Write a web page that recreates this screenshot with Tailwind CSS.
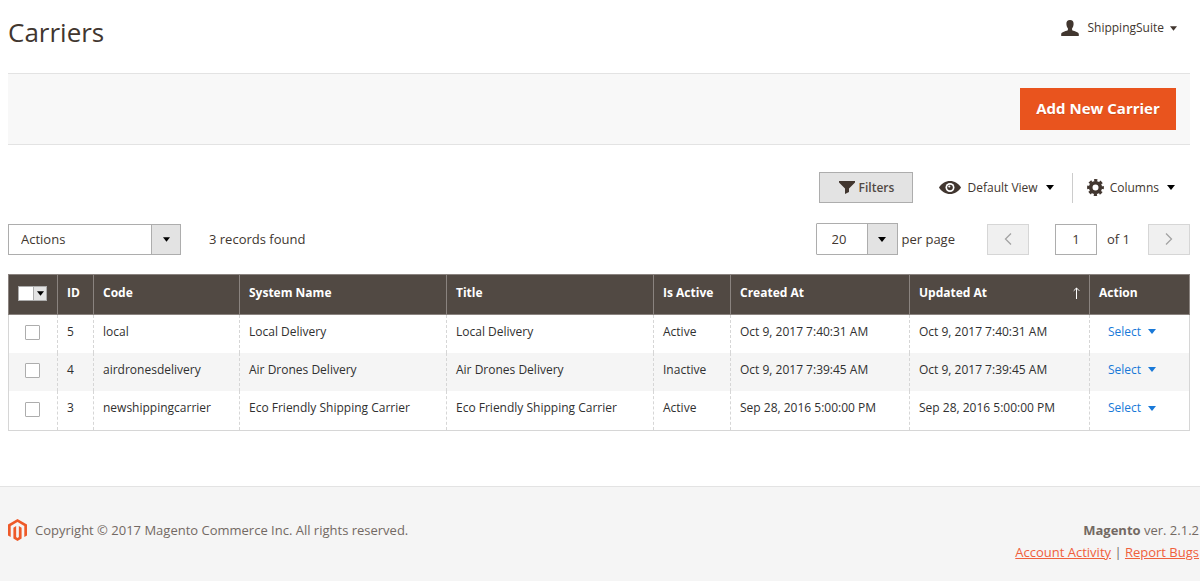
<!DOCTYPE html>
<html lang="en">
<head>
  <meta charset="UTF-8" />
  <meta name="viewport" content="width=device-width, initial-scale=1.0"/>
  <title>Carriers</title>
  <script src="https://cdn.jsdelivr.net/npm/@tailwindcss/browser@4"></script>
</head>
<body class="bg-white text-[#41362f] font-['Open_Sans','Noto_Sans',sans-serif] text-sm">

  <!-- shared icons -->
  <svg class="hidden">
    <symbol id="caret" viewBox="0 0 8 5"><path d="M0 0h8L4 5z" fill="currentColor"/></symbol>
  </svg>

  <div class="pl-2 pr-[10px]">
    <header class="flex items-start justify-between h-[73px] pt-3 pr-[13px]">
      <h1 class="text-[26px] leading-10">Carriers</h1>
      <button class="flex items-center h-8 text-xs">
        <svg class="w-[18px] h-4 mr-2" viewBox="0 0 18 16" fill="#41362f"><path d="M9 0C6.500 0 5.300 1.600 5.400 4c.1 2 .6 3.300 1.500 4.200v1.900C6.300 11.200.600 11.600.200 14v2h17.600v-2c-.4-2.400-6.100-2.800-6.700-3.900V8.200c.9-.9 1.400-2.200 1.500-4.200C12.700 1.600 11.500 0 9 0z"/></svg>
        ShippingSuite
        <svg class="w-[7px] h-[5px] ml-[6px]"><use href="#caret"/></svg>
      </button>
    </header>

    <div class="flex justify-end bg-[#f8f8f8] border-y border-[#e3e3e3] py-[14px] pr-[14px]">
      <button class="h-[42px] w-[156px] bg-[#e9541e] text-white font-bold text-[15px] text-shadow-2xs">Add New Carrier</button>
    </div>

    <!-- grid controls -->
    <div class="flex items-center justify-end h-[31px] mt-[27px] pr-[15px] text-xs">
      <button class="flex items-center justify-center h-[31px] w-[94px] bg-[#e3e3e3] border border-[#adadad] font-semibold text-[#514943]">
        <svg class="w-4 h-[13px] mr-1" viewBox="0 0 16 13" fill="#41362f"><path d="M0 0h16v1.500L10 7.500V11l-4 2V7.500L0 1.500z"/></svg>
        Filters
      </button>
      <button class="flex items-center ml-[26px]">
        <svg class="w-[22px] h-[13px] mr-[6px]" viewBox="0 0 22 13"><path d="M0 6.500C2.500 2.500 6.500 0 11 0s8.500 2.500 11 6.500C19.500 10.500 15.500 13 11 13S2.500 10.500 0 6.500z" fill="#41362f"/><circle cx="11" cy="6.500" r="4.500" fill="#fff"/><circle cx="11" cy="6.500" r="2.800" fill="#41362f"/><circle cx="10.300" cy="5.500" r="1.100" fill="#fff"/></svg>
        Default View
        <svg class="w-2 h-[5px] ml-2 text-black"><use href="#caret"/></svg>
      </button>
      <span class="w-px h-[30px] bg-[#ccc] ml-[18px] mr-[14px]"></span>
      <button class="flex items-center">
        <svg class="w-[17px] h-[17px] mr-[6px]" viewBox="-8.500 -8.500 17 17" fill="none" stroke="#41362f"><circle r="4.800" stroke-width="3.600"/><circle r="7.200" stroke-width="2.400" stroke-dasharray="3.200 2.455" stroke-dashoffset="1.600"/></svg>
        Columns
        <svg class="w-2 h-[5px] ml-2 text-black"><use href="#caret"/></svg>
      </button>
    </div>

    <!-- mass actions and paging -->
    <div class="flex items-center h-8 mt-5 text-[13px]">
      <div class="relative">
        <select aria-label="Actions" class="appearance-none block w-[173px] h-[31px] pl-3 border border-[#adadad] bg-white">
          <option>Actions</option>
        </select>
        <span class="absolute inset-y-0 right-0 w-[30px] flex items-center justify-center bg-[#e3e3e3] border border-[#adadad] text-black pointer-events-none"><svg class="w-[7px] h-[5px]"><use href="#caret"/></svg></span>
      </div>
      <span class="ml-7">3 records found</span>

      <div class="relative ml-auto">
        <select id="perPage" class="appearance-none block w-[82px] h-8 pl-[15px] border border-[#adadad] rounded-[1px] bg-white">
          <option>20</option>
        </select>
        <span class="absolute inset-y-0 right-0 w-[31px] flex items-center justify-center bg-[#e3e3e3] border border-[#adadad] text-black pointer-events-none"><svg class="w-2 h-[5px]"><use href="#caret"/></svg></span>
      </div>
      <label for="perPage" class="ml-1">per page</label>
      <button aria-label="Previous page" class="flex items-center justify-center w-[42px] h-[31px] ml-8 bg-[#f0f0f0] border border-[#d6d6d6]">
        <svg class="w-2 h-3" viewBox="0 0 8 12" fill="none" stroke="#a3a3a3" stroke-width="1.300"><path d="M7 .5L1.500 6 7 11.500"/></svg>
      </button>
      <input id="page" type="text" value="1" class="w-[42px] h-[31px] ml-[26px] border border-[#adadad] text-center"/>
      <label for="page" class="ml-[10px]">of 1</label>
      <button aria-label="Next page" class="flex items-center justify-center w-[42px] h-[31px] ml-[18px] bg-[#f0f0f0] border border-[#d6d6d6]">
        <svg class="w-2 h-3" viewBox="0 0 8 12" fill="none" stroke="#a3a3a3" stroke-width="1.300"><path d="M1 .5L6.500 6 1 11.500"/></svg>
      </button>
    </div>

    <table class="w-full table-fixed mt-[19px] text-xs text-[#303030] border border-[#d6d6d6]">
      <colgroup>
        <col class="w-[49px]"/>
        <col class="w-[36px]"/>
        <col class="w-[146px]"/>
        <col/>
        <col/>
        <col class="w-[77px]"/>
        <col class="w-[179px]"/>
        <col class="w-[180px]"/>
        <col class="w-[100px]"/>
      </colgroup>
      <thead>
        <tr class="h-10 bg-[#514943] text-white text-left *:border *:border-[#8a837f] *:px-[9px] *:pb-1 *:font-bold">
          <th>
            <span class="flex w-[29px] h-[15px] mt-[2px] bg-white border border-[#adadad]">
              <input type="checkbox" aria-label="Select all" class="appearance-none w-[14px] h-[13px]"/>
              <button aria-label="Selection options" class="flex flex-1 items-center justify-center bg-[#e3e3e3] border-l border-[#adadad] text-black"><svg class="w-[7px] h-[5px]"><use href="#caret"/></svg></button>
            </span>
          </th>
          <th>ID</th>
          <th>Code</th>
          <th>System Name</th>
          <th>Title</th>
          <th>Is Active</th>
          <th>Created At</th>
          <th>
            <div class="flex items-center justify-between">
              Updated At
              <svg class="w-[7px] h-3" viewBox="0 0 7 12" fill="none" stroke="#fff"><path d="M3.500 12V1M.7 3.800L3.500 1l2.800 2.800"/></svg>
            </div>
          </th>
          <th>Action</th>
        </tr>
      </thead>
      <tbody class="*:h-[38px] *:last:h-10 *:*:px-[9px] *:*:pb-1 *:*:border-x *:*:border-dashed *:*:border-[#d6d6d6]">
        <tr>
          <td><input type="checkbox" aria-label="Select carrier 5" class="appearance-none block w-[15px] h-[15px] ml-[7px] mt-[2px] bg-white border border-[#adadad] rounded-[1px]"/></td>
          <td>5</td>
          <td>local</td>
          <td>Local Delivery</td>
          <td>Local Delivery</td>
          <td>Active</td>
          <td>Oct 9, 2017 7:40:31 AM</td>
          <td>Oct 9, 2017 7:40:31 AM</td>
          <td><button class="flex items-center ml-[9px] text-[#1979d8]">Select <svg class="w-2 h-[5px] ml-[7px]"><use href="#caret"/></svg></button></td>
        </tr>
        <tr class="bg-[#f5f5f5]">
          <td><input type="checkbox" aria-label="Select carrier 4" class="appearance-none block w-[15px] h-[15px] ml-[7px] mt-[2px] bg-white border border-[#adadad] rounded-[1px]"/></td>
          <td>4</td>
          <td>airdronesdelivery</td>
          <td>Air Drones Delivery</td>
          <td>Air Drones Delivery</td>
          <td>Inactive</td>
          <td>Oct 9, 2017 7:39:45 AM</td>
          <td>Oct 9, 2017 7:39:45 AM</td>
          <td><button class="flex items-center ml-[9px] text-[#1979d8]">Select <svg class="w-2 h-[5px] ml-[7px]"><use href="#caret"/></svg></button></td>
        </tr>
        <tr>
          <td><input type="checkbox" aria-label="Select carrier 3" class="appearance-none block w-[15px] h-[15px] ml-[7px] mt-[2px] bg-white border border-[#adadad] rounded-[1px]"/></td>
          <td>3</td>
          <td>newshippingcarrier</td>
          <td>Eco Friendly Shipping Carrier</td>
          <td>Eco Friendly Shipping Carrier</td>
          <td>Active</td>
          <td>Sep 28, 2016 5:00:00 PM</td>
          <td>Sep 28, 2016 5:00:00 PM</td>
          <td><button class="flex items-center ml-[9px] text-[#1979d8]">Select <svg class="w-2 h-[5px] ml-[7px]"><use href="#caret"/></svg></button></td>
        </tr>
      </tbody>
    </table>
  </div>

  <footer class="flex items-start justify-between mt-[55px] pl-2 pr-px pt-8 pb-[18px] bg-[#f5f5f5] border-t border-[#e3e3e3] text-[13px] leading-[22px] text-[#736963]">
    <div class="flex items-center">
      <svg class="w-[19px] h-[22px] mr-2" viewBox="0 0 19 22" fill="#ee5a29"><path d="M9.500 0L0 5.500v10.900l2.700 1.600V7.100l6.800-4 6.800 4V18l2.700-1.600V5.500z"/><path d="M10.850 18.100l-1.350.8-1.350-.8V7.100L5.400 8.700v10.900L9.500 22l4.100-2.400V8.700l-2.750-1.600z"/></svg>
      Copyright © 2017 Magento Commerce Inc. All rights reserved.
    </div>
    <div class="text-right">
      <p><b>Magento</b> ver. 2.1.2</p>
      <p><a href="#" class="text-[#f0603c] underline">Account Activity</a> | <a href="#" class="text-[#f0603c] underline">Report Bugs</a></p>
    </div>
  </footer>

</body>
</html>
